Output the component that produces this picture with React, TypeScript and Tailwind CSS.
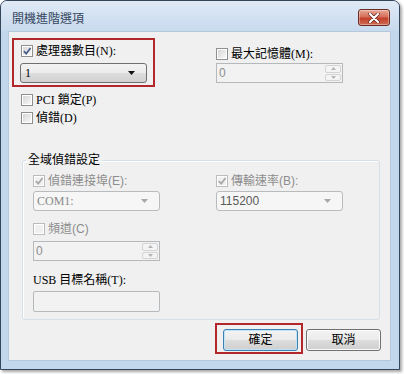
import React from 'react';

const serif = "font-[family-name:'Liberation_Serif','Noto_Sans_CJK_TC',serif]";
const sans = "font-[family-name:'Liberation_Sans','Noto_Sans_CJK_TC',sans-serif]";

const CheckBox: React.FC<{ checked?: boolean; disabled?: boolean }> = ({ checked, disabled }) => (
  <span
    className={`flex h-[12px] w-[12px] shrink-0 items-center justify-center border ${
      disabled ? 'border-[#bcbcbc]' : 'border-[#8e8f8f]'
    } bg-white p-[1px]`}
  >
    <span
      className={`relative block h-full w-full ${
        disabled ? 'bg-[#f0f0f0]' : 'bg-gradient-to-br from-[#d6d6d6] to-[#f8f8f8]'
      }`}
    >
      {checked && (
        <svg viewBox="0 0 10 10" className="absolute -left-[1px] -top-[1px] h-[10px] w-[10px]">
          <path
            d="M1.8 5.2 L4.2 7.6 L8.6 2"
            fill="none"
            stroke={disabled ? '#a8a8a8' : '#4a5f8c'}
            strokeWidth="1.7"
          />
        </svg>
      )}
    </span>
  </span>
);

const CheckRow: React.FC<{
  checked?: boolean;
  disabled?: boolean;
  font?: string;
  children: React.ReactNode;
}> = ({ checked, disabled, font = serif, children }) => (
  <div className="flex h-[14px] items-center gap-[3px]">
    <CheckBox checked={checked} disabled={disabled} />
    <span
      className={`${font} whitespace-nowrap text-[12px] leading-[14px] ${
        disabled ? 'text-[#8d8d8d]' : 'text-black'
      }`}
    >
      {children}
    </span>
  </div>
);

const Arrow: React.FC<{ color: string }> = ({ color }) => (
  <svg viewBox="0 0 7 4" className="h-[4px] w-[7px]">
    <path d="M0 0 H7 L3.5 4 Z" fill={color} />
  </svg>
);

const Combo: React.FC<{ value: string; disabled?: boolean; font?: string; textColor?: string }> = ({
  value,
  disabled,
  font = serif,
  textColor,
}) =>
  disabled ? (
    <div className="flex h-[20px] w-[127px] items-center justify-between rounded-[3px] border border-[#b8bcbf] bg-[#f6f6f6] pl-[3px] pr-[11px]">
      <span className={`${font} text-[12px] leading-[14px] ${textColor ?? 'text-[#8a8a8a]'}`}>{value}</span>
      <Arrow color="#a9a9a9" />
    </div>
  ) : (
    <div className="flex h-[20px] w-[127px] items-center justify-between rounded-[3px] border border-[#707070] bg-[linear-gradient(#f3f3f3,#ebebeb_50%,#dddddd_51%,#d1d1d1)] pl-[4px] pr-[11px]">
      <span className={`${font} text-[12px] leading-[14px] text-black`}>{value}</span>
      <Arrow color="#111" />
    </div>
  );

const Spin: React.FC<{ value: string }> = ({ value }) => (
  <div className="flex h-[20px] w-[127px] items-stretch border border-[#b5b9bc] bg-[#f2f2f2]">
    <span className={`${sans} flex-1 pl-[2px] text-[12px] leading-[18px] text-[#8d8d8d]`}>{value}</span>
    <div className="my-[1px] mr-[1px] flex w-[16px] flex-col gap-[1px]">
      <div className="flex flex-1 items-center justify-center rounded-[2px] border border-[#d4d4d4] bg-[#f4f4f4]">
        <svg viewBox="0 0 5 3" className="h-[3px] w-[5px]">
          <path d="M0 3 H5 L2.5 0 Z" fill="#b4b4b4" />
        </svg>
      </div>
      <div className="flex flex-1 items-center justify-center rounded-[2px] border border-[#d4d4d4] bg-[#f4f4f4]">
        <svg viewBox="0 0 5 3" className="h-[3px] w-[5px]">
          <path d="M0 0 H5 L2.5 3 Z" fill="#b4b4b4" />
        </svg>
      </div>
    </div>
  </div>
);

const Button: React.FC<{ label: string; focused?: boolean }> = ({ label, focused }) => (
  <button
    className={`flex h-[22px] w-[75px] items-center justify-center rounded-[3px] border ${
      focused
        ? 'border-[#3c7fb1] shadow-[inset_0_0_0_1px_#bfe3f7]'
        : 'border-[#707070] shadow-[inset_0_0_0_1px_#fbfbfb]'
    } bg-[linear-gradient(#f3f3f3,#ebebeb_50%,#dddddd_51%,#cfcfcf)] ${sans} text-[12px] leading-[14px] text-black`}
  >
    {label}
  </button>
);

export default function App() {
  return (
    <div className="h-[374px] w-[404px] bg-white">
      <div className="flex h-[370px] w-[400px] flex-col rounded-t-[7px] border border-[#34465a] bg-[#c2d7ec] shadow-[2px_2px_3px_rgba(0,0,0,0.35)]">
        {/* title bar */}
        <div className="flex h-[30px] items-start justify-between rounded-t-[6px] bg-gradient-to-b from-[#e0eaf6] to-[#c8daee]">
          <span className={`${sans} ml-[11px] mt-[11px] text-[12px] leading-[14px] text-[#34475e]`}>
            開機進階選項
          </span>
          <div className="mr-[9px] mt-[8px] flex h-[17px] w-[32px] items-center justify-center rounded-[3px] border border-[#6b2a20] bg-[linear-gradient(#e7a896,#d66e5a_45%,#c2412b_55%,#cf6a52)] shadow-[inset_0_0_0_1px_rgba(255,255,255,0.35)]">
            <svg viewBox="0 0 12 10" className="h-[10px] w-[12px]">
              <path d="M2 1 L10 9 M10 1 L2 9" stroke="#5a1f16" strokeWidth="3.4" strokeLinecap="round" />
              <path d="M2 1 L10 9 M10 1 L2 9" stroke="#fff" strokeWidth="2.2" strokeLinecap="round" />
            </svg>
          </div>
        </div>

        {/* client area */}
        <div className="ml-[7px] h-[330px] w-[383px] border border-[#b4c7db] bg-[#f0f0f0]">
          <div className="-m-[1px]">
            {/* top section */}
            <div className="flex pl-[4px] pt-[7px]">
              <div className="flex h-[49px] w-[143px] flex-col border-2 border-[#b3272b] pl-[6px] pt-[4px]">
                <div className="ml-[1px]">
                  <CheckRow checked>處理器數目(N):</CheckRow>
                </div>
                <div className="mt-[5px]">
                  <Combo value="1" />
                </div>
              </div>
              <div className="ml-[61px] flex flex-col pt-[9px]">
                <CheckRow>最大記憶體(M):</CheckRow>
                <div className="mt-[2px]">
                  <Spin value="0" />
                </div>
              </div>
            </div>

            <div className="mt-[6px] flex flex-col gap-[4px] pl-[13px]">
              <CheckRow>PCI 鎖定(P)</CheckRow>
              <CheckRow>偵錯(D)</CheckRow>
            </div>

            {/* group */}
            <fieldset className="ml-[14px] mt-[28px] w-[358px] rounded-[3px] border border-[#d5dfe5] shadow-[inset_1px_1px_0_#fff]">
              <legend className={`${sans} ml-[3px] px-[2px] text-[12px] leading-[14px] text-black`}>
                全域偵錯設定
              </legend>
              <div className="flex flex-col pb-[7px] pl-[10px] pt-[7px]">
                <div className="flex gap-[56px]">
                  <div className="flex w-[127px] flex-col gap-[3px]">
                    <CheckRow checked disabled font={sans}>
                      偵錯連接埠(E):
                    </CheckRow>
                    <Combo value="COM1:" disabled />
                  </div>
                  <div className="flex w-[127px] flex-col gap-[3px]">
                    <CheckRow checked disabled font={sans}>
                      傳輸速率(B):
                    </CheckRow>
                    <Combo value="115200" disabled font={sans} textColor="text-[#5a5a5a]" />
                  </div>
                </div>
                <div className="mt-[11px]">
                  <CheckRow disabled font={sans}>
                    頻道(C)
                  </CheckRow>
                </div>
                <div className="mt-[5px]">
                  <Spin value="0" />
                </div>
                <span className={`${serif} mt-[12px] text-[12px] leading-[14px] text-black`}>
                  USB 目標名稱(T):
                </span>
                <div className="mt-[4px] h-[21px] w-[127px] rounded-[2px] border border-[#b5b9bc] bg-[#f2f2f2]" />
              </div>
            </fieldset>

            {/* buttons */}
            <div className="mt-[3px] flex items-start pl-[207px]">
              <div className="h-[31px] border-2 border-[#b3272b] pb-[1px] pl-[6px] pr-[3px] pt-[4px]">
                <Button label="確定" focused />
              </div>
              <div className="ml-[3px] mt-[6px]">
                <Button label="取消" />
              </div>
            </div>
          </div>
        </div>
      </div>
    </div>
  );
}
